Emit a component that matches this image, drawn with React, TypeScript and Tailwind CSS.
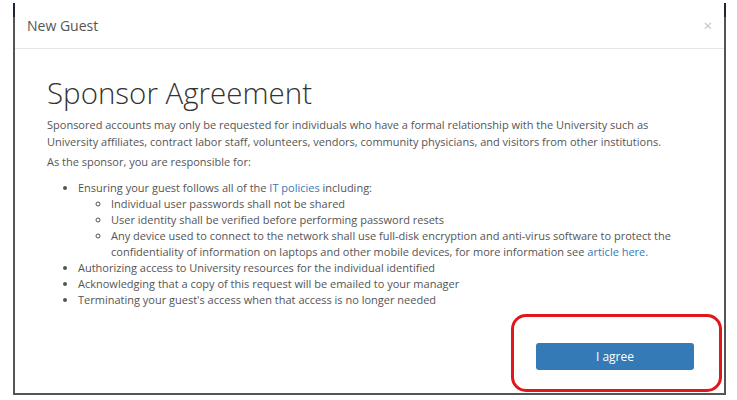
import React from 'react';

const body = "font-['Open_Sans',_'Liberation_Sans',_sans-serif]";

export default function App() {
  return (
    <div className={`relative w-[737px] h-[400px] bg-white pt-[3px] ${body}`}>
      <div className="ml-[13px] w-[713px] h-[392px] border-x-2 border-b-2 border-[#555] bg-white flex flex-col">
        <div className="h-[46px] border-b border-[#e5e5e5] flex items-center justify-between pl-[12px] pr-[12px]">
          <span className="text-[14px] text-[#555]">New Guest</span>
          <span className="text-[15px] leading-none text-[#c4c4c4]">×</span>
        </div>

        <div className="flex flex-col px-[32px] pt-[27px] text-[11px] leading-[16px] text-[#555]">
          <h1 className="text-[29.5px] leading-[33px] font-light text-[#333]">Sponsor Agreement</h1>
          <p className="mt-[7px] leading-[17px]">
            Sponsored accounts may only be requested for individuals who have a formal relationship with the University such as
            University affiliates, contract labor staff, volunteers, vendors, community physicians, and visitors from other institutions.
          </p>
          <p className="mt-[4px]">As the sponsor, you are responsible for:</p>
          <ul className="list-disc pl-[31px] mt-[10px]">
            <li>
              Ensuring your guest follows all of the <span className="text-[#337ab7]">IT policies</span> including:
              <ul className="list-[circle] pl-[33px]">
                <li>Individual user passwords shall not be shared</li>
                <li>User identity shall be verified before performing password resets</li>
                <li>
                  Any device used to connect to the network shall use full-disk encryption and anti-virus software to protect the
                  confidentiality of information on laptops and other mobile devices, for more information see{' '}
                  <span className="text-[#337ab7]">article here.</span>
                </li>
              </ul>
            </li>
            <li>Authorizing access to University resources for the individual identified</li>
            <li>Acknowledging that a copy of this request will be emailed to your manager</li>
            <li>Terminating your guest's access when that access is no longer needed</li>
          </ul>
        </div>

        <div className="mt-auto mb-[23px] flex justify-end pr-[30px]">
          <button className="w-[158px] h-[27px] rounded-[3px] bg-[#337ab7] text-white text-[12px]">I agree</button>
        </div>
      </div>

      {/* dark tops of the side borders */}
      <div className="absolute left-[13px] top-[3px] w-[2px] h-[14px] bg-[#1c2530]" />
      <div className="absolute left-[724px] top-[3px] w-[2px] h-[14px] bg-[#1c2530]" />

      {/* red annotation */}
      <div className="absolute left-[511px] top-[314px] w-[211px] h-[78px] rounded-[15px] border-[3px] border-[#e0161b]" />
    </div>
  );
}
